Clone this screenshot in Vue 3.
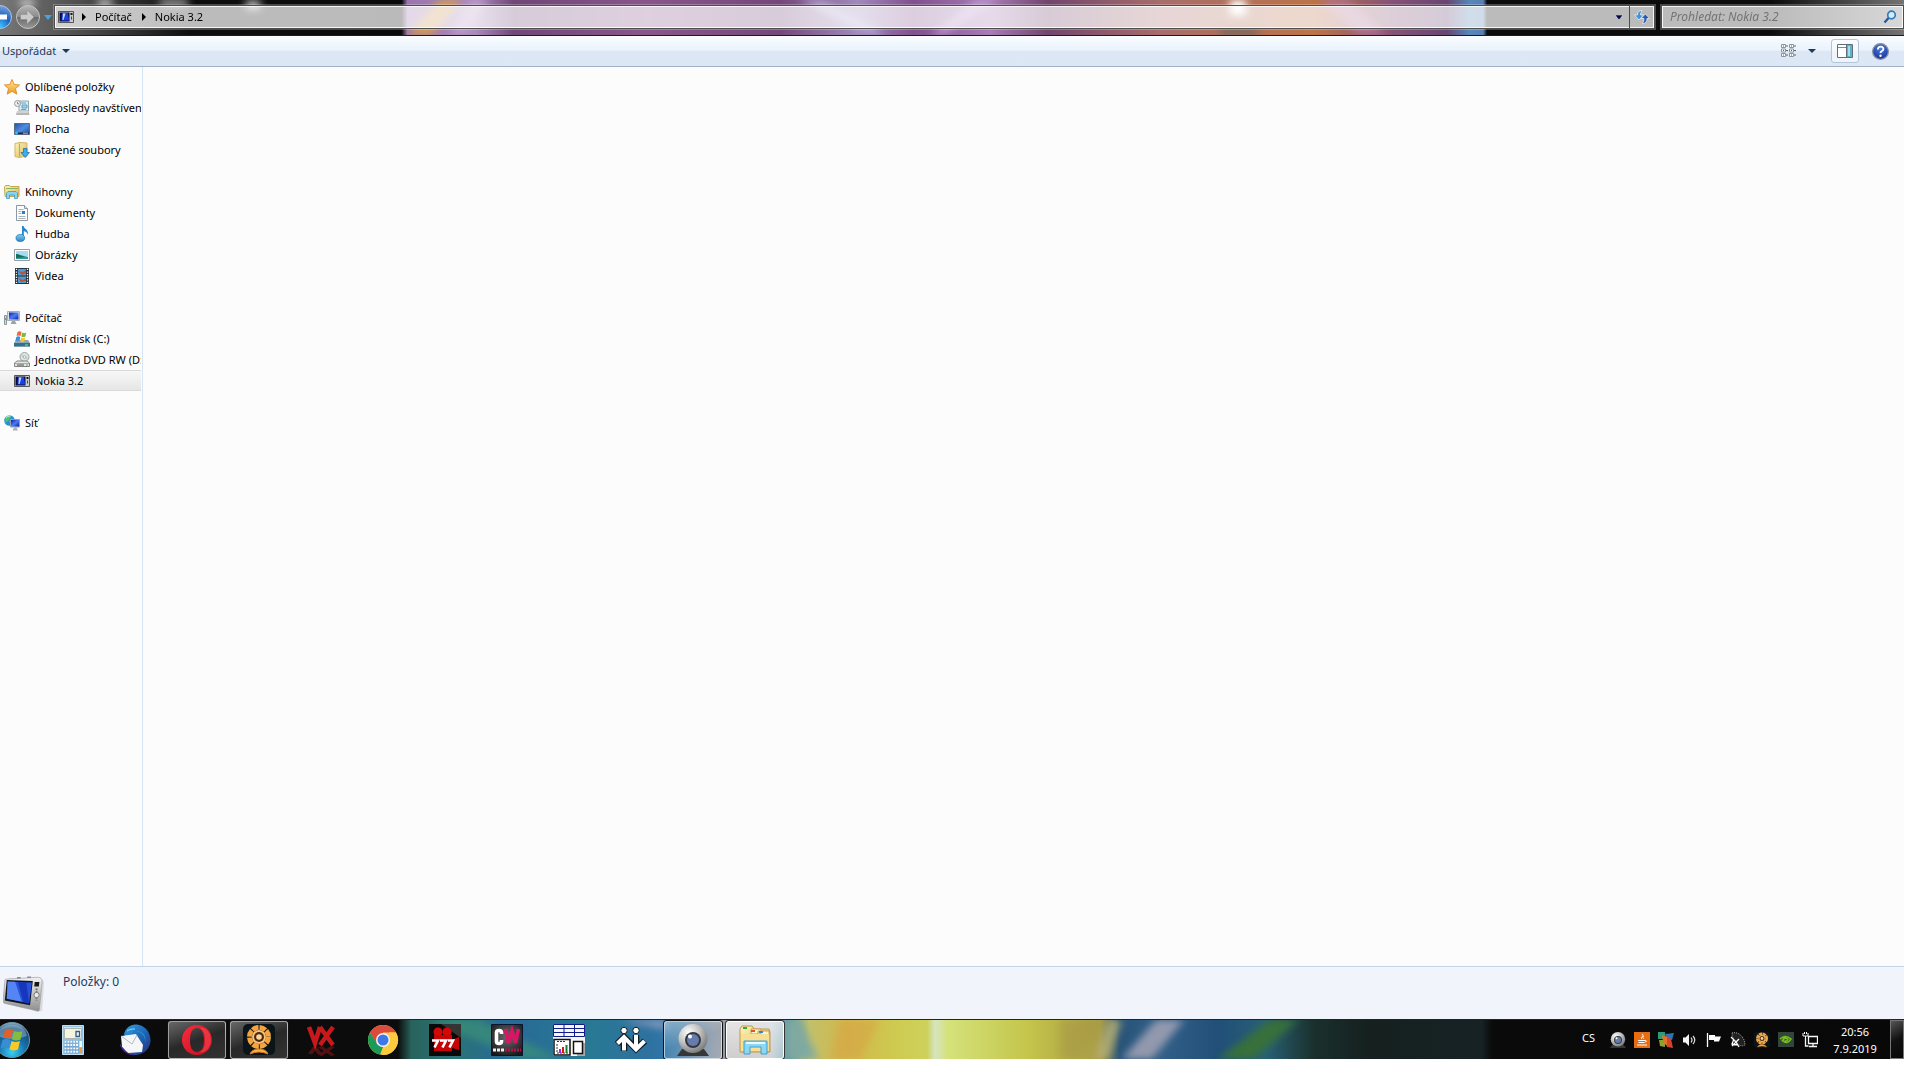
<template>
  <svg class="sprite" aria-hidden="true">
    <defs>
      <linearGradient id="gGold" x1="0" y1="0" x2="0" y2="1"><stop offset="0" stop-color="#ffe9a0" /><stop offset="1" stop-color="#f09a1a" /></linearGradient>
      <linearGradient id="gFolder" x1="0" y1="0" x2="1" y2="1"><stop offset="0" stop-color="#fdf3b8" /><stop offset="1" stop-color="#dcb95a" /></linearGradient>
      <linearGradient id="gSky" x1="0" y1="0" x2="0" y2="1"><stop offset="0" stop-color="#7fd0f2" /><stop offset="1" stop-color="#2a86c6" /></linearGradient>
      <linearGradient id="gScreen" x1="0" y1="0" x2="1" y2="1"><stop offset="0" stop-color="#0a1bb0" /><stop offset="0.5" stop-color="#4c7df2" /><stop offset="1" stop-color="#0b1fa8" /></linearGradient>
      <linearGradient id="gDesk" x1="0" y1="0" x2="1" y2="1"><stop offset="0" stop-color="#2450a8" /><stop offset="0.5" stop-color="#4f8de0" /><stop offset="1" stop-color="#1c4796" /></linearGradient>
      <linearGradient id="gMetal" x1="0" y1="0" x2="0" y2="1"><stop offset="0" stop-color="#f2f2f2" /><stop offset="1" stop-color="#8e8e8e" /></linearGradient>
      <radialGradient id="gBall" cx="0.35" cy="0.3" r="0.75"><stop offset="0" stop-color="#ffffff" /><stop offset="0.5" stop-color="#c4c4c4" /><stop offset="1" stop-color="#777777" /></radialGradient>
      <radialGradient id="gOrb" cx="0.5" cy="0.85" r="0.85"><stop offset="0" stop-color="#39d0f5" /><stop offset="0.45" stop-color="#1673ae" /><stop offset="0.8" stop-color="#174a75" /><stop offset="1" stop-color="#8fb4cc" /></radialGradient>
      <radialGradient id="gBack" cx="0.5" cy="0.9" r="0.9"><stop offset="0" stop-color="#3fc4ff" /><stop offset="0.5" stop-color="#1a62c0" /><stop offset="1" stop-color="#7ba4dc" /></radialGradient>
      <linearGradient id="gForward" x1="0" y1="0" x2="0" y2="1"><stop offset="0" stop-color="#b4b4b4" /><stop offset="0.48" stop-color="#8c8c8c" /><stop offset="0.5" stop-color="#686868" /><stop offset="1" stop-color="#989898" /></linearGradient>
      <linearGradient id="gOpera" x1="0" y1="0" x2="1" y2="1"><stop offset="0" stop-color="#ff2a3c" /><stop offset="1" stop-color="#b8101e" /></linearGradient>
      <radialGradient id="gHelp" cx="0.5" cy="0.3" r="0.7"><stop offset="0" stop-color="#4f80e0" /><stop offset="1" stop-color="#15309a" /></radialGradient>
      <linearGradient id="gBird" x1="0" y1="0" x2="1" y2="1"><stop offset="0" stop-color="#2fa3e4" /><stop offset="0.6" stop-color="#1c5fae" /><stop offset="1" stop-color="#2b2a7a" /></linearGradient>
      <radialGradient id="gCw" cx="0.5" cy="0.4" r="0.7"><stop offset="0" stop-color="#6c6c6c" /><stop offset="1" stop-color="#151515" /></radialGradient>
    </defs>

    <symbol id="star" viewBox="0 0 16 16"><path d="M8 .5l2.200 5 5.400.5-4.100 3.600 1.300 5.500L8 12.300l-4.800 2.800 1.300-5.500L.4 6l5.400-.5z" fill="url(#gGold)" stroke="#dd8a28" stroke-width=".9" /></symbol>
    <symbol id="recent" viewBox="0 0 16 16"><path d="M5 1h9.500v10H5z" fill="#dcecf3" stroke="#96a6ae" /><path d="M7 3h5M8 5h5v3H8zM7 9.500h5" stroke="#5da7c8" fill="#9ed3e8" /><path d="M3 11h11.500l1 4H2z" fill="#b6b6b6" /><path d="M3 12h11" stroke="#eee" /><circle cx="3.500" cy="3.500" r="3" fill="#eee" stroke="#929ba2" /><path d="M3.500 1.800v2h1.700" fill="none" stroke="#67747c" stroke-width=".8" /></symbol>
    <symbol id="desk" viewBox="0 0 16 16"><path d="M.5 2.500h15v11H.5z" fill="url(#gDesk)" stroke="#566b85" /><path d="M1 11.500h14V13H1z" fill="#232b38" /><circle cx="2.500" cy="12" r="1.500" fill="#44b8e8" /><path d="M9 12.200h5" stroke="#b1bdcb" /></symbol>
    <symbol id="down" viewBox="0 0 16 16"><path d="M1 1.500l5-1 7 .5v13l-8 1.500-4-1z" fill="url(#gFolder)" stroke="#d1b565" /><path d="M5.500 1.500v13" stroke="#c6a34c" /><path d="M9.500 6.500h3.500v4h2.400l-4.200 5-4.200-5h2.500z" fill="#3faee6" stroke="#1f74b4" stroke-width=".8" /></symbol>
    <symbol id="library" viewBox="0 0 16 16"><path d="M.5 3l1-1.500h4l1 1H15v10H1z" fill="url(#gFolder)" stroke="#c9a64a" /><path d="M2 4.500h12" stroke="#87b56a" /><path d="M2.500 14.500V9L4 7.500h8L13.500 9v5.500h-3V11h-5v3.500z" fill="#8bd4ef" stroke="#3e9ac4" stroke-width=".8" /></symbol>
    <symbol id="doc" viewBox="0 0 16 16"><path d="M2.500.5h8l3 3v12h-11z" fill="#fcfdfe" stroke="#8c98a4" /><path d="M10.500.5v3h3" fill="#d7dfe7" stroke="#8c98a4" /><path d="M4.500 4.500h5M4.500 6.500h3M4.500 8.500h3M4.500 11.500h7M4.500 13.500h7" stroke="#aab2ba" /><path d="M8 6h3v3H8z" fill="#2e7fc1" /></symbol>
    <symbol id="music" viewBox="0 0 16 16"><path d="M8 12V0h1.600c.4 3 5.400 3.500 4.200 9-.6-2.800-2-3.500-4-3.800V12z" fill="#2388ce" /><ellipse cx="6.300" cy="12" rx="4.300" ry="3.500" fill="url(#gSky)" stroke="#1c6eb3" stroke-width=".7" /></symbol>
    <symbol id="picture" viewBox="0 0 16 16"><path d="M.5 2.500h15v11H.5z" fill="#fff" stroke="#939da5" /><path d="M2 4h12v8H2z" fill="#a5dcf2" /><path d="M2 7c3 0 6 2 12 3v2H2z" fill="#2f9a96" /><path d="M2 7c3 0 5 2 9 3l-9 1z" fill="#176b62" /></symbol>
    <symbol id="video" viewBox="0 0 16 16"><path d="M1 0h14v16H1z" fill="#29313b" /><path d="M4 1h8v6.500H4zM4 8.500h8V15H4z" fill="#4d9cd0" /><path d="M4 3l5 1 3-2v3L8 7zM4 10l5 2 3-2v3l-5 1z" fill="#b3543e" /><path d="M2.500.8v15M13.500.8v15" stroke="#f4f4f4" stroke-width="1.300" stroke-dasharray="1.300 1.300" /></symbol>
    <symbol id="computer" viewBox="0 0 16 16"><path d="M.5 5.500h2v9h-2z" fill="#d2d8da" stroke="#8c979b" /><path d="M1.500 8v2" stroke="#4bc04b" /><path d="M3.500 1.500h12v9h-12z" fill="#dde1e6" stroke="#a7b0b9" /><path d="M5 2.500h9.500v7H5z" fill="url(#gScreen)" /><path d="M8 11h3l1.500 3h-6z" fill="#9aa3aa" /></symbol>
    <symbol id="disk" viewBox="0 0 16 16"><path d="M2 9h12l2 3v3.500H0V12z" fill="#8fa5b1" /><path d="M0 12h16v3.500H0z" fill="#356f8c" /><path d="M11 14h3" stroke="#67f0a0" /><path d="M3.500 1q2-1.500 4 0l-.9 4q-2-1-4 0z" fill="#ed6834" /><path d="M8.300 1.500q2 1.500 4 0l-.9 4q-2 1-4 0z" fill="#76bb40" /><path d="M2.300 6q2-1.500 4 0l-.9 4q-2-1-4 0z" fill="#398fd8" /><path d="M7.200 6.500q2 1.500 4 0l-.9 4q-2 1-4 0z" fill="#f8c52d" /></symbol>
    <symbol id="dvd" viewBox="0 0 16 16"><circle cx="10.500" cy="5" r="4.500" fill="#dfe5e5" stroke="#9ba3a3" /><path d="M7 3l7 4" stroke="#b6d9b6" stroke-width="1.500" /><circle cx="10.500" cy="5" r="1.300" fill="#fff" stroke="#929a9a" stroke-width=".7" /><path d="M3 9h10l2.500 2v3.500H.5V11z" fill="#e5e5e5" stroke="#848484" /><path d="M1 11.500h14" stroke="#aaa" /><path d="M3 13h7" stroke="#4c4c4c" /><path d="M12 13h2" stroke="#42be42" /></symbol>
    <symbol id="player" viewBox="0 0 16 16"><path d="M.5 2.500h15v11H.5z" fill="#c9c9ca" stroke="#55555b" /><path d="M1.500 3.500h10v9h-10z" fill="#060c43" /><path d="M4 4h6l1 7.500H3.500z" fill="#1c43e0" /><path d="M5 4.500h2.500L5.500 11H4.500z" fill="#c3d3ff" /><path d="M12.500 4h2v2h-2z" fill="#151515" /><path d="M13.500 7.500v3" stroke="#4a4a4a" /></symbol>
    <symbol id="network" viewBox="0 0 16 16"><circle cx="5.500" cy="5.500" r="5.300" fill="#2a8fd1" /><path d="M2 2q3-2 5 0L5 5 1 8zM5 6l4-1-2 5z" fill="#52c65b" /><path d="M1.500 3q2-2.500 5-2" stroke="#c4f1f8" fill="none" /><path d="M6.500 4.500h9v7.500h-9z" fill="#d1dbe5" stroke="#929fae" /><path d="M7 5h8v6.500H7z" fill="url(#gScreen)" /><path d="M10 12.500h2.500l1.500 3H8.500z" fill="#a7b2bf" /></symbol>

    <symbol id="calc" viewBox="0 0 32 32"><path d="M5.500 1.500h21v29h-21z" fill="#8fc3e6" stroke="#bfe0f4" /><path d="M7 3h18v12H7z" fill="#cfe6f5" /><path d="M7.500 4.500h17v10h-17z" fill="#f6f4df" stroke="#a9b7b4" /><path d="M19 7.500h3.500v5H19z" fill="none" stroke="#2c5f94" stroke-width="1.300" /><path d="M7.500 18h14M7.500 21.300h14M7.500 24.600h14M7.500 27.900h14" stroke="#3e7db4" stroke-width="2.600" stroke-dasharray="2.300 .6" /><path d="M7.500 17.800h14M7.500 21.100h14M7.500 24.400h14M7.500 27.700h14" stroke="#fff" stroke-width="2" stroke-dasharray="2 .9" /><path d="M22.500 17h2.500v6h-2.500z" fill="#f4fafe" /><path d="M22.500 24h2.500v5h-2.500z" fill="#ee9b43" /></symbol>
    <symbol id="mail" viewBox="0 0 32 32"><path d="M5 10C7 3 13-1 20 1c9 2 13 12 11 19-2 7-8 11-15 11C8 31 2 26 1 20c3 6 8 8 13 8z" fill="url(#gBird)" /><path d="M2 12l15-2 7 11-1 7-14 1-6-6z" fill="#f4f6f8" /><path d="M2 12l11 8 5-9" fill="none" stroke="#b3bac2" /><path d="M6 8c3-5 8-8 14-7-5 1-7 4-6 7 6-2 13 3 12 11 2-7-2-12-8-12L6 11z" fill="#2b8bd2" /><path d="M1 20c1 7 8 12 15 11-6-1-9-3-12-7z" fill="#4b218c" /><path d="M8 7c3-2 5-2 8-2" stroke="#8cddf6" fill="none" /></symbol>
    <symbol id="opera" viewBox="0 0 32 32"><path fill-rule="evenodd" d="M16 1c9 0 15 7 15 15s-6 15-15 15S1 24 1 16 7 1 16 1zm0 3c-5 0-7 5-7 12s2 12 7 12 7-5 7-12-2-12-7-12z" fill="url(#gOpera)" /><path d="M18 4c7-2 12 5 12 12s-5 14-12 12c5-2 6-6 6-12s-1-10-6-12z" fill="#fb4b54" opacity=".55" /></symbol>
    <symbol id="flower" viewBox="0 0 32 32"><rect width="32" height="31" rx="5" fill="#0b1519" /><circle cx="16" cy="13" r="9.500" fill="none" stroke="#f4a53e" stroke-width="5" stroke-dasharray="6.500 1" /><circle cx="16" cy="13" r="7" fill="#f8c27a" /><circle cx="16" cy="13" r="5" fill="#4d2a10" /><circle cx="16" cy="13" r="2.800" fill="#ffd39b" /><path d="M7 30q2-5 9-5t9 5q-9-4-18 0z" fill="#f7b450" stroke="#d77b16" /></symbol>
    <symbol id="vx" viewBox="0 0 32 32"><g fill="none" stroke="#c9181c" stroke-width="4.500"><path d="M4 3l6 16 5-16M15 3l13 18M28 3L15 21" /></g><g transform="matrix(1 0 0 -.5 0 33)" opacity=".35" fill="none" stroke="#d51a1e" stroke-width="4.500"><path d="M5 6l5 13 5-13M15 3l13 18M28 3L15 21" /></g></symbol>
    <symbol id="chrome" viewBox="0 0 32 32"><circle cx="16" cy="16" r="15" fill="#fcca3f" /><path d="M3 8.500A15 15 0 0 1 29 8.500H16L9.500 20z" fill="#db4b3d" /><path d="M3 8.500l7 11.500 6 3-3 7.700A15 15 0 0 1 3 8.500z" fill="#1a9b57" /><path d="M29 8.500a15 15 0 0 1-14 22.500l7-12V8.500z" fill="#fcca3f" /><circle cx="16" cy="16" r="7" fill="#f3f4f4" /><circle cx="16" cy="16" r="5.500" fill="#3c78e8" /></symbol>
    <symbol id="cam777" viewBox="0 0 32 32"><path d="M0 0h32v32H0z" fill="#090909" /><path d="M12 0h20v14z" fill="#343434" /><circle cx="9" cy="8" r="4.500" fill="#d60707" /><circle cx="18" cy="8" r="4.500" fill="#d60707" /><path d="M5 11h18v5l7-3v13l-7-2v3H5z" fill="#c80505" /><path d="M3 16.500h6l-3.500 7M11 16.500h6l-3.500 7M19 16.500h5l-3.500 7" fill="none" stroke="#fff" stroke-width="2.600" /></symbol>
    <symbol id="camworld" viewBox="0 0 32 32"><path d="M.5.500h31v31H.500z" fill="url(#gCw)" stroke="#0a1430" /><path d="M10.500 10V8.500q0-2-2.500-2t-2.500 2v9q0 2 2.500 2t2.500-2V16" fill="none" stroke="#fff" stroke-width="3.600" /><path d="M14.500 5l3 14 3.500-12 3.500 12 3-14" fill="none" stroke="#d91566" stroke-width="3.600" /><path d="M2 26h11" stroke="#eee" stroke-width="3" stroke-dasharray="3 1" /><path d="M14 26h16" stroke="#b01452" stroke-width="3" stroke-dasharray="2 1" /></symbol>
    <symbol id="sheet" viewBox="0 0 32 32"><path d="M0 0h32v32H0z" fill="#f6f6f6" /><path d="M.5.500h31v12H.500zM.5 4.500h31M.5 8.500h31M11 .5v12M21.500.500v12" fill="none" stroke="#101c8c" /><path d="M1 15.500h16V31H1z" fill="#fff" stroke="#111" stroke-width="1.500" /><path d="M24 19h8v13h-8z" fill="#aaa" /><path d="M20.500 17.500h9v12h-9z" fill="#fff" stroke="#111" stroke-width="1.500" /><path d="M4 20v9h11M4 17.500h9" fill="none" stroke="#333" stroke-dasharray="2 1" /><path d="M7 29v-4" stroke="#a02cd6" stroke-width="2" /><path d="M10 29v-6" stroke="#dc1717" stroke-width="2" /><path d="M13.500 29v-8" stroke="#157c28" stroke-width="2" /></symbol>
    <symbol id="people" viewBox="0 0 32 32"><g fill="none" stroke="#111b22" stroke-width="6.500"><path d="M2 20l7-7 12 12 9-8M9 13v14M21 11v14" /></g><g fill="none" stroke="#fff" stroke-width="4"><path d="M2.500 19.500l6.500-6.500 12 12.500 8.500-8.500M9 13v13.500M21 11v14" /></g><circle cx="9" cy="6.500" r="3.200" fill="#fff" stroke="#111b22" /><circle cx="21" cy="6.500" r="3.200" fill="#fff" stroke="#111b22" /></symbol>
    <symbol id="webcam" viewBox="0 0 32 32"><path d="M0 32l5-7h22l5 7z" fill="#353637" /><circle cx="16" cy="14.500" r="14.500" fill="url(#gBall)" /><circle cx="16" cy="16" r="8" fill="#343841" /><circle cx="16" cy="16" r="6" fill="#667cad" /><circle cx="13" cy="12.500" r="2" fill="#fff" /></symbol>
    <symbol id="explorer" viewBox="0 0 32 32"><path d="M1 5l2-3h10l2 3h15l1 3v20H1z" fill="url(#gFolder)" stroke="#bd9650" /><path d="M12 5h10v5H12zM19 7h11v5H19z" fill="#fff4cb" stroke="#c69d50" /><path d="M4 3h4v2H4z" fill="#33ac32" /><path d="M12 6h4v2h-4z" fill="#de5822" /><path d="M20 7h4v2h-4z" fill="#348bc1" /><path d="M2 10h28v17H2z" fill="#f8df96" /><path d="M5 30V17h23v13h-6v-7H11v7z" fill="#8bd8f4" stroke="#439dcb" /><path d="M7 19h19" stroke="#e5faff" stroke-width="2" /></symbol>
    <symbol id="orb" viewBox="0 0 36 36"><circle cx="18" cy="18" r="17.500" fill="url(#gOrb)" stroke="#6d97b1" /><path d="M3 14C6-1 30-1 33 14q-15 6-30 0z" fill="#bad3df" opacity=".4" /><path d="M11 8q4-2 8 0l-2 8.500q-4-2-8 0z" fill="#e45d2a" /><path d="M20 9q4 2 8.500 0l-2 8.500q-4 2-8.500 0z" fill="#84bc3e" /><path d="M8.500 18q4-2 8 0l-2 8.500q-4-2-8 0z" fill="#3a8dd4" /><path d="M17.500 19q4 2 8.500 0l-2 8.500q-4 2-8.500 0z" fill="#f9c927" /></symbol>

    <symbol id="java" viewBox="0 0 16 16"><path d="M0 0h16v16H0z" fill="#e66d12" /><path d="M8 2c3 2-2 3 0 5M10 4c-2 1-1 2 0 3M4 8.500h7M4.500 10.500h6M3 13h10M11 8.500q3 0 0 2" fill="none" stroke="#fff" /></symbol>
    <symbol id="blocks" viewBox="0 0 16 16"><path d="M0 0h7v7H0z" fill="#2e9a78" /><path d="M7 2l9-1-2 7-6-1z" fill="#2e72b9" /><path d="M1 8h6v7l-5-1z" fill="#8aa52c" /><path d="M8 4l5 3 2 9-6-1z" fill="#d2452a" /><path d="M4 3l5 2v9l-4-4z" fill="#e4702c" /></symbol>
    <symbol id="sound" viewBox="0 0 16 16"><path d="M1 5.500h2.500L7 2v12l-3.500-3.500H1z" fill="#f5f5f5" /><path d="M9 5.500q2 2.500 0 5M11 4q3.500 4 0 8" fill="none" stroke="#ddd" stroke-width="1.200" /></symbol>
    <symbol id="flag" viewBox="0 0 16 16"><path d="M1.500 1v14" stroke="#fff" stroke-width="1.300" /><path d="M3 3h6v1.500h6l-2 5H8V8H3z" fill="#fff" /></symbol>
    <symbol id="dish" viewBox="0 0 16 16"><path d="M2 1c7-2 13 5 13 12q-4 2-7-1Q2 7 2 1z" fill="#222" stroke="#aaa" stroke-dasharray="1 1" /><path d="M1 5l5 5 3-3M2 14l4-4 3 5M4 7l-2 5 6 1" fill="none" stroke="#fff" stroke-width="1.300" /></symbol>
    <symbol id="nvidia" viewBox="0 0 16 16"><path d="M0 0h16v15H0z" fill="#314638" /><path d="M2 7q5-5 11 0-4 6-8 2 4 1 5-2-3-2-5 1 0-2 3-3" fill="none" stroke="#79bd21" stroke-width="1.500" /></symbol>
    <symbol id="plug" viewBox="0 0 16 16"><path d="M6.500 4.500h9v7h-9zM11 12v2M7 14.500h8M3.500 6v8h3" fill="none" stroke="#f7f7f7" stroke-width="1.300" /><path d="M1 1v3h5V1M2.500 0v2M4.500 0v2M3.500 4v3" fill="none" stroke="#f7f7f7" /></symbol>
  </svg>

  <div class="desktop">
    <header class="glass">
      <svg class="aero" viewBox="0 0 1904 36" preserveAspectRatio="none" aria-hidden="true">
        <defs>
          <linearGradient id="aeroTop">
            <stop offset="0" stop-color="#777" /><stop offset=".04" stop-color="#505050" /><stop offset=".1" stop-color="#0e0e0e" />
            <stop offset=".211" stop-color="#0b0a0b" /><stop offset=".214" stop-color="#9a75ad" /><stop offset=".25" stop-color="#a98abb" />
            <stop offset=".27" stop-color="#704777" /><stop offset=".34" stop-color="#89568a" /><stop offset=".41" stop-color="#75487a" />
            <stop offset=".45" stop-color="#a08abb" /><stop offset=".48" stop-color="#81508e" /><stop offset=".52" stop-color="#a87cb6" />
            <stop offset=".55" stop-color="#72466d" /><stop offset=".61" stop-color="#a86d6b" /><stop offset=".69" stop-color="#bd7348" />
            <stop offset=".73" stop-color="#875377" /><stop offset=".76" stop-color="#684572" /><stop offset=".772" stop-color="#5688b9" />
            <stop offset=".779" stop-color="#5b7eb0" /><stop offset=".781" stop-color="#0b0b0b" /><stop offset=".93" stop-color="#0c0c0c" /><stop offset="1" stop-color="#747474" />
          </linearGradient>
          <filter id="soft" x="-30%" y="-30%" width="160%" height="160%"><feGaussianBlur stdDeviation="4" /></filter>
        </defs>
        <path d="M0 0h1904v36H0z" fill="url(#aeroTop)" />
        <g filter="url(#soft)">
          <path d="M440 0h22l-30 36h-25z" fill="#d19b55" /><path d="M470 0h18l-22 36h-16z" fill="#c4a0d2" opacity=".7" />
          <path d="M800 0h24l62 36h-16z" fill="#b9abd8" opacity=".8" /><path d="M975 0h22l-52 36h-14z" fill="#c4a2dc" opacity=".7" />
          <path d="M1230 0h16v16h-16z" fill="#fff" /><path d="M1220 29h38v7h-38z" fill="#6d675e" /><path d="M1320 0h28l38 36h-28z" fill="#b67ba6" opacity=".7" />
          <path d="M160 0h28v6h-28zM246 0h14v10h-14z" fill="#b4b4b4" /><path d="M20 0h14v6H20zM98 0h14v6H98z" fill="#ddd" />
        </g>
      </svg>

      <nav class="history">
        <button class="back" type="button" aria-label="Zpět">
          <svg viewBox="0 0 24 24"><circle cx="12" cy="12" r="11.500" fill="url(#gBack)" stroke="#aac3e5" /><path d="M12 5l-7 7 7 7v-4.500h7v-5h-7z" fill="#fff" /></svg>
        </button>
        <button class="forward" type="button" aria-label="Vpřed">
          <svg viewBox="0 0 24 24"><circle cx="12" cy="12" r="11.500" fill="url(#gForward)" stroke="#c3c3c3" /><path d="M11 5l7 7-7 7v-4.500H4.500v-5H11z" fill="#cacaca" stroke="#888" stroke-width=".5" /></svg>
        </button>
        <button class="recent-pages" type="button" aria-label="Poslední stránky">
          <svg viewBox="0 0 8 5"><path d="M0 0h8L4 5z" fill="#45a4dc" /></svg>
        </button>
      </nav>

      <div class="address">
        <svg class="icon16"><use href="#player" /></svg>
        <svg class="crumb-arrow" viewBox="0 0 4 8"><path d="M0 0l4 4-4 4z" /></svg>
        <a href="#">Počítač</a>
        <svg class="crumb-arrow" viewBox="0 0 4 8"><path d="M0 0l4 4-4 4z" /></svg>
        <a href="#">Nokia 3.2</a>
        <button class="address-drop" type="button" aria-label="Předchozí umístění">
          <svg viewBox="0 0 8 5"><path d="M0 0h8L4 5z" fill="#04044a" stroke="#fff" stroke-width=".5" /></svg>
        </button>
        <button class="refresh" type="button" aria-label="Aktualizovat">
          <svg viewBox="0 0 16 14"><path d="M8 .5Q3.500.500 3.500 5H.500L5 10l4.500-5H6.500Q6.500 3 8 .5z" fill="#3f96d6" stroke="#f4f9fd" stroke-width=".7" /><path d="M8.500 13.500q4.500 0 4.500-5h2.700L11.300 4 7 8.500h3q0 3-1.500 5z" fill="#2c5ca8" stroke="#f4f9fd" stroke-width=".7" /></svg>
        </button>
      </div>

      <label class="search">
        <input type="text" placeholder="Prohledat: Nokia 3.2" aria-label="Prohledat: Nokia 3.2" />
        <svg viewBox="0 0 14 14"><circle cx="8.500" cy="5" r="3.800" fill="#d8ebf5" stroke="#2c80c2" stroke-width="1.700" /><path d="M5.500 8L1.500 12.500" stroke="#205c9d" stroke-width="2.300" /></svg>
      </label>
    </header>

    <div class="toolbar">
      <button class="organize" type="button">Uspořádat <svg viewBox="0 0 8 4"><path d="M0 0h8L4 4z" /></svg></button>
      <div class="tools">
        <button class="view" type="button" aria-label="Změnit zobrazení">
          <svg viewBox="0 0 15 14"><path d="M.5.500h4v3h-4zM.5 5h4v3h-4zM.5 9.500h4v3h-4zM8.500.500h4v3h-4zM8.500 5h4v3h-4zM8.500 9.500h4v3h-4z" fill="#fff" stroke="#8b959c" /><path d="M5 2h2M5 6.500h2M5 11h2M13 2h2M13 6.500h2M13 11h2" stroke="#5b6871" /><path d="M2 2h1M10 2h1M2 11h1M10 11h1" stroke="#2c6f9b" /><path d="M2 6.500h1M10 6.500h1" stroke="#bd3939" /></svg>
        </button>
        <button class="view-drop" type="button" aria-label="Další možnosti"><svg viewBox="0 0 8 4"><path d="M0 0h8L4 4z" /></svg></button>
        <button class="preview" type="button" aria-label="Podokno náhledu">
          <svg viewBox="0 0 16 14"><path d="M.5.500h15v13H.500z" fill="#fff" stroke="#626e76" /><path d="M1 3.500h9" stroke="#7e8992" /><path d="M9.500 1v12" stroke="#626e76" /><path d="M10 1h5v12h-5z" fill="#5ab3cf" /><path d="M11 2h2v10h-2z" fill="#a5dceb" /></svg>
        </button>
        <button class="help" type="button" aria-label="Nápověda">
          <svg viewBox="0 0 16 16"><circle cx="8" cy="8" r="7.400" fill="url(#gHelp)" stroke="#8790a2" stroke-width="1.200" /><path d="M5.500 6q0-2.500 2.700-2.500 2.600 0 2.500 2.200 0 1.300-1.600 2.100Q8 8.400 8 9.500" fill="none" stroke="#fff" stroke-width="1.700" /><circle cx="8" cy="12" r="1.100" fill="#fff" /></svg>
        </button>
      </div>
    </div>

    <main class="panes">
      <aside class="tree">
        <ul v-for="group in groups" :key="group.label">
          <li class="root"><a href="#"><svg class="icon16"><use :href="`#${group.icon}`" /></svg><span>{{ group.label }}</span></a></li>
          <li v-for="item in group.items" :key="item.label" :class="{ selected: item.selected }">
            <a href="#"><svg class="icon16"><use :href="`#${item.icon}`" /></svg><span>{{ item.label }}</span></a>
          </li>
        </ul>
      </aside>
      <section class="files"></section>
    </main>

    <section class="details">
      <svg viewBox="0 0 44 40" aria-hidden="true">
        <path d="M6 2l36 2q2 0 2 3l-2 30-6 1z" fill="#a9a9a9" opacity=".35" />
        <path d="M3 3l34-2q5 0 5 4l-3 31q0 2-3 1L2 29q-2 0-2-3L2 5q0-2 1-2z" fill="url(#gMetal)" stroke="#999" stroke-width=".7" />
        <path d="M4 4l28 1-3 26L2 26z" fill="#121521" /><path d="M5 5.500l26 1-3 22.500L4 24z" fill="#2752dc" />
        <path d="M5 5.500l8 .3L20 27 4 24z" fill="#6291fa" opacity=".8" /><path d="M16 6l9 .4L28 29l-6-1z" fill="#0b27a5" opacity=".6" />
        <path d="M34 6h5l-.5 5h-5z" fill="#171717" /><path d="M36 13v13" stroke="#666" stroke-width="2" stroke-dasharray="2 1" /><circle cx="36" cy="20" r="2.800" fill="#eee" stroke="#777" />
        <path d="M15 1.500h4M26 1h4" stroke="#888" stroke-width="1.500" />
      </svg>
      <p>Položky: 0</p>
    </section>

    <footer class="taskbar">
      <svg class="aero" viewBox="0 0 1904 40" preserveAspectRatio="none" aria-hidden="true">
        <defs>
          <linearGradient id="aeroBottom">
            <stop offset="0" stop-color="#0b0b0b" /><stop offset=".209" stop-color="#0c0c0c" /><stop offset=".216" stop-color="#28635c" />
            <stop offset=".24" stop-color="#2a7377" /><stop offset=".265" stop-color="#286996" /><stop offset=".31" stop-color="#287994" /><stop offset=".34" stop-color="#2e719f" />
            <stop offset=".35" stop-color="#2e76a8" /><stop offset=".375" stop-color="#8b98a8" /><stop offset=".386" stop-color="#a09a98" /><stop offset=".405" stop-color="#a8b4bd" /><stop offset=".414" stop-color="#5d98aa" />
            <stop offset=".425" stop-color="#c2c16a" /><stop offset=".445" stop-color="#d1b84b" /><stop offset=".47" stop-color="#ceca50" /><stop offset=".487" stop-color="#cdd25c" />
            <stop offset=".491" stop-color="#d6e4c0" /><stop offset=".498" stop-color="#d4e279" /><stop offset=".54" stop-color="#c4c54b" /><stop offset=".578" stop-color="#a89b45" />
            <stop offset=".588" stop-color="#275378" /><stop offset=".61" stop-color="#315f88" /><stop offset=".64" stop-color="#214f78" /><stop offset=".665" stop-color="#286075" />
            <stop offset=".69" stop-color="#1a302c" /><stop offset=".72" stop-color="#15201f" /><stop offset=".778" stop-color="#172225" /><stop offset=".784" stop-color="#0a0a0a" /><stop offset="1" stop-color="#080808" />
          </linearGradient>
        </defs>
        <path d="M0 0h1904v40H0z" fill="url(#aeroBottom)" />
        <g filter="url(#soft)">
          <path d="M430 0h50l80 40h-40z" fill="#3a9178" opacity=".7" /><path d="M620 0h46v10z" fill="#a7a8c5" opacity=".7" />
          <path d="M786 0h14l18 40h-32z" fill="#7fa9a0" /><path d="M840 0h40l-20 40h-30z" fill="#d6a846" opacity=".7" /><path d="M1060 0h40l-20 40h-20z" fill="#a99a44" opacity=".6" />
          <path d="M1108 0h14l-14 40h-14z" fill="#b5b07a" opacity=".8" /><path d="M1156 0h28l-32 40h-30z" fill="#9299ad" /><path d="M1270 0h28l-44 40h-36z" fill="#37703a" />
        </g>
      </svg>

      <button class="start" type="button" aria-label="Start"><svg><use href="#orb" /></svg></button>
      <div class="apps">
        <button v-for="app in apps" :key="app.name" type="button" :class="[app.state]" :aria-label="app.name">
          <svg><use :href="`#${app.icon}`" /></svg>
        </button>
      </div>

      <div class="tray">
        <span class="lang">CS</span>
        <button v-for="item in tray" :key="item.name" type="button" :aria-label="item.name"><svg class="icon16"><use :href="`#${item.icon}`" /></svg></button>
        <time class="clock"><span>20:56</span><span>7.9.2019</span></time>
        <button class="show-desktop" type="button" aria-label="Zobrazit plochu"></button>
      </div>
    </footer>
  </div>
</template>

<script setup>
const groups = [
  {
    label: 'Oblíbené položky',
    icon: 'star',
    items: [
      { label: 'Naposledy navštívené', icon: 'recent' },
      { label: 'Plocha', icon: 'desk' },
      { label: 'Stažené soubory', icon: 'down' },
    ],
  },
  {
    label: 'Knihovny',
    icon: 'library',
    items: [
      { label: 'Dokumenty', icon: 'doc' },
      { label: 'Hudba', icon: 'music' },
      { label: 'Obrázky', icon: 'picture' },
      { label: 'Videa', icon: 'video' },
    ],
  },
  {
    label: 'Počítač',
    icon: 'computer',
    items: [
      { label: 'Místní disk (C:)', icon: 'disk' },
      { label: 'Jednotka DVD RW (D:)', icon: 'dvd' },
      { label: 'Nokia 3.2', icon: 'player', selected: true },
    ],
  },
  { label: 'Síť', icon: 'network', items: [] },
];

const apps = [
  { name: 'Kalkulačka', icon: 'calc' },
  { name: 'Thunderbird', icon: 'mail' },
  { name: 'Opera', icon: 'opera', state: 'running' },
  { name: 'Kamera', icon: 'flower', state: 'running' },
  { name: 'VX', icon: 'vx' },
  { name: 'Chrome', icon: 'chrome' },
  { name: '777', icon: 'cam777' },
  { name: 'CW', icon: 'camworld' },
  { name: 'Tabulky', icon: 'sheet' },
  { name: 'Lidé', icon: 'people' },
  { name: 'Webkamera', icon: 'webcam', state: 'running' },
  { name: 'Průzkumník', icon: 'explorer', state: 'active' },
];

const tray = [
  { name: 'Webkamera', icon: 'webcam' },
  { name: 'Java', icon: 'java' },
  { name: 'Bloky', icon: 'blocks' },
  { name: 'Hlasitost', icon: 'sound' },
  { name: 'Centrum akcí', icon: 'flag' },
  { name: 'Anténa', icon: 'dish' },
  { name: 'Kamera', icon: 'flower' },
  { name: 'NVIDIA', icon: 'nvidia' },
  { name: 'Síť', icon: 'plug' },
];
</script>

<style>
body { background: #fff; }
</style>

<style scoped>
.sprite { position: absolute; width: 0; height: 0; }

.desktop {
  box-sizing: border-box;
  min-height: 100vh;
  padding: 0 16px 21px 0;
  display: flex;
  flex-direction: column;
  overflow: hidden;
  font: 11px/20px "Segoe UI", "Noto Sans", sans-serif;
  color: #000;
}

button {
  padding: 0;
  border: 0;
  background: none;
  font: inherit;
  color: inherit;
  display: flex;
  align-items: center;
  justify-content: center;
}
a { color: inherit; text-decoration: none; }
svg { display: block; flex: none; }
.icon16 { width: 16px; height: 16px; }
.aero { position: absolute; inset: 0; width: 100%; height: 100%; z-index: -1; }

.glass {
  position: relative;
  z-index: 0;
  box-sizing: border-box;
  height: 36px;
  padding-top: 5px;
  display: flex;
  align-items: flex-start;
  overflow: hidden;
  border-bottom: 1px solid #1c1c20;
  box-shadow: inset 0 -1px rgba(255, 255, 255, 0.65);
}
.history { width: 54px; display: flex; align-items: center; }
.history .back { margin-left: -12px; }
.history .back svg, .history .forward svg { width: 24px; height: 24px; }
.history .forward { margin-left: 4px; }
.recent-pages { margin-left: 4px; }
.recent-pages svg { width: 8px; height: 5px; }

.address, .search {
  box-sizing: border-box;
  height: 24px;
  display: flex;
  align-items: center;
  border: 1px solid #4d4d4d;
  background: rgba(255, 255, 255, 0.72);
  box-shadow: inset 0 0 0 1px rgba(255, 255, 255, 0.85), 0 0 0 1px rgba(255, 255, 255, 0.25);
}
.address { flex: 1; padding-left: 3px; }
.crumb-arrow { width: 4px; height: 8px; margin: 0 9px 0 10px; }
.address .icon16 + .crumb-arrow { margin-left: 8px; }
.address-drop { width: 20px; height: 22px; margin-left: auto; }
.address-drop svg { width: 8px; height: 5px; }
.refresh { width: 25px; height: 22px; border-left: 1px solid #4d4d4d; }
.refresh svg { width: 16px; height: 14px; }
.search { width: 243px; margin-left: 6px; padding: 0 6px 0 8px; }
.search input {
  flex: 1;
  min-width: 0;
  padding: 0;
  border: 0;
  outline: 0;
  background: none;
  font: inherit;
  font-size: 12px;
}
.search input::placeholder { color: #747474; font-style: italic; opacity: 1; }
.search svg { width: 14px; height: 14px; }

.toolbar {
  box-sizing: border-box;
  height: 31px;
  display: flex;
  align-items: center;
  justify-content: space-between;
  padding: 0 15px 0 2px;
  border-bottom: 1px solid #a0afc3;
  background: linear-gradient(#fafdff, #e9f2fc 48%, #dce6f4 50%, #dde8f7);
  color: #1e395b;
}
.toolbar path:only-child { fill: #1e395b; }
.organize { gap: 6px; }
.organize svg, .view-drop svg { width: 8px; height: 4px; }
.tools { display: flex; align-items: center; }
.view svg { width: 15px; height: 14px; }
.view-drop { margin: 0 15px 0 12px; }
.preview {
  box-sizing: border-box;
  width: 28px;
  height: 24px;
  border: 1px solid #b3c5d9;
  border-radius: 3px;
  background: rgba(255, 255, 255, 0.55);
}
.preview svg { width: 16px; height: 14px; }
.help { margin-left: 13px; }
.help svg { width: 17px; height: 17px; }

.panes { flex: 1; display: flex; background: #fcfcfc; }
.tree {
  box-sizing: border-box;
  width: 143px;
  padding: 9px 1px 0 0;
  border-right: 1px solid #d6e5f5;
}
.tree ul { margin: 0 0 21px; padding: 0; list-style: none; }
.tree li { box-sizing: border-box; height: 21px; padding-left: 14px; overflow: hidden; }
.tree li.root { padding-left: 4px; }
.tree li a { height: 21px; display: flex; align-items: center; gap: 5px; white-space: nowrap; }
.tree li.selected {
  background: linear-gradient(#f8f8f8, #e5e5e5);
  box-shadow: inset 0 1px #dadada, inset 0 -1px #dadada;
}
.files { flex: 1; }

.details {
  box-sizing: border-box;
  height: 53px;
  display: flex;
  gap: 19px;
  padding: 5px 0 0 3px;
  border-top: 1px solid #c3d5e8;
  background: #f1f5fb;
  color: #1e395b;
  font-size: 12px;
}
.details svg { width: 41px; height: 40px; margin-top: 3px; }
.details p { margin: 0; }

.taskbar {
  position: relative;
  z-index: 0;
  box-sizing: border-box;
  height: 40px;
  display: flex;
  align-items: center;
  overflow: hidden;
  border-top: 1px solid #20252b;
  box-shadow: inset 0 1px rgba(255, 255, 255, 0.55);
}
.start { width: 30px; margin-right: 14px; }
.start svg { width: 36px; height: 36px; margin-left: -6px; }
.apps { display: flex; gap: 4px; }
.apps button {
  box-sizing: border-box;
  width: 58px;
  height: 38px;
  border: 1px solid transparent;
  border-radius: 3px;
}
.apps svg { width: 32px; height: 32px; }
.apps .running {
  border-color: rgba(255, 255, 255, 0.55);
  background: linear-gradient(160deg, rgba(255, 255, 255, 0.38), rgba(255, 255, 255, 0.12) 50%, rgba(255, 255, 255, 0.16));
  box-shadow: 0 0 0 1px #111;
}
.apps .active {
  border-color: #fff;
  background: linear-gradient(160deg, rgba(255, 255, 255, 0.75), rgba(255, 255, 255, 0.4));
  box-shadow: 0 0 0 1px #333;
}

.tray { margin-left: auto; display: flex; align-items: center; color: #fff; line-height: 17px; }
.tray button { width: 24px; }
.lang { margin: 0 11px 4px 0; }
.clock { width: 66px; margin-right: 2px; display: flex; flex-direction: column; align-items: center; }
.tray .show-desktop {
  box-sizing: border-box;
  width: 14px;
  height: 39px;
  border: 1px solid #777;
  background: linear-gradient(150deg, #555, #111 50%, #080808);
}
</style>
